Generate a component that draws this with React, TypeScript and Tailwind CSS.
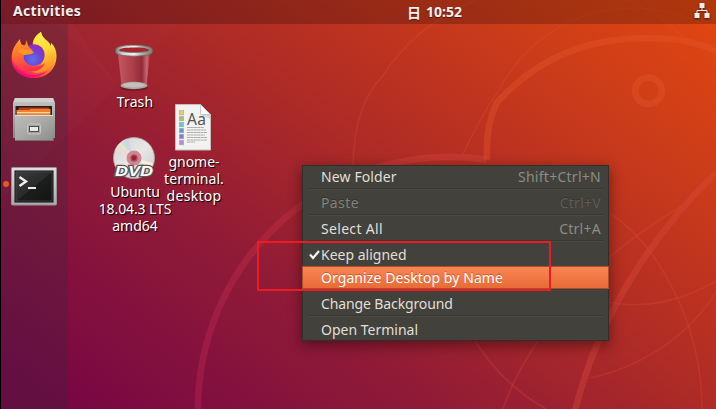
import type { ReactNode } from "react";

function Wallpaper() {
  return (
    <svg className="absolute inset-0" width="716" height="409" viewBox="0 0 716 409">
      <defs>
        <linearGradient id="sky" gradientUnits="userSpaceOnUse" x1="70" y1="409" x2="490" y2="-151">
          <stop offset="0" stopColor="#780743" />
          <stop offset="0.32" stopColor="#901b37" />
          <stop offset="0.43" stopColor="#9e222f" />
          <stop offset="0.55" stopColor="#ad2b27" />
          <stop offset="0.64" stopColor="#b83022" />
          <stop offset="0.81" stopColor="#cb3c1a" />
          <stop offset="1" stopColor="#e04611" />
        </linearGradient>
        <linearGradient id="ring" gradientUnits="userSpaceOnUse" x1="200" y1="409" x2="430" y2="155">
          <stop offset="0" stopColor="#b31f52" stopOpacity="0.5" />
          <stop offset="0.6" stopColor="#c03040" stopOpacity="0.45" />
          <stop offset="1" stopColor="#cc3d38" stopOpacity="0.6" />
        </linearGradient>
      </defs>
      <rect width="716" height="409" fill="url(#sky)" />
      <path d="M55 24 L118 86 L177 24Z" fill="#fff" fillOpacity="0.01" />
      <path d="M0 0H55L118 86L0 200Z" fill="#fff" fillOpacity="0.015" />
      <g fill="none" stroke="#e8503c" strokeOpacity="0.25" strokeWidth="1.6">
        <path d="M353 165 C354 120 366 93 382 77 C404 42 437 16 478 -1" />
        <path d="M463 154 C477 125 486 108 497 93 C518 53 562 8 633 8 C665 8 692 17 716 31" />
        <path d="M622 -1 Q660 12 684 38" />
        <path d="M610 213 C659 246 702 325 702 409" />
        <path d="M610 257 Q637 233 682 206" />
        <path d="M608 302 C645 310 684 300 716 281" />
        <path d="M716 292 C687 338 640 367 590 378" />
        <path d="M475 341 Q503 385 546 409" />
        <path d="M538 341 Q514 376 503 409" />
      </g>
      <path d="M198 409 A252 252 0 0 1 487 159.500" fill="none" stroke="url(#ring)" strokeWidth="6.500" />
      <g fill="none" stroke="#e65a2c" strokeOpacity="0.36" strokeWidth="6.500">
        <path d="M487 160 C486 139 489 119 496.500 103 C541 54 592 38 648 38 C673 38 698 42 716 51" />
        <circle cx="648.500" cy="90.700" r="13.300" />
      </g>
      <path d="M716 173 C666 221 602 302 575 411" fill="none" stroke="#db493c" strokeOpacity="0.38" strokeWidth="6.500" />
    </svg>
  );
}

function FirefoxIcon() {
  return (
    <svg width="46" height="48" viewBox="0 0 46 48">
      <defs>
        <linearGradient id="fxBody" x1="0.8" y1="0.05" x2="0.25" y2="1">
          <stop offset="0" stopColor="#fff44f" />
          <stop offset="0.35" stopColor="#ffb62b" />
          <stop offset="0.65" stopColor="#ff6a35" />
          <stop offset="0.85" stopColor="#ff3156" />
          <stop offset="1" stopColor="#e6007e" />
        </linearGradient>
        <linearGradient id="fxTail" x1="0.3" y1="0" x2="0.6" y2="1">
          <stop offset="0" stopColor="#fff44f" />
          <stop offset="0.5" stopColor="#ffd936" />
          <stop offset="1" stopColor="#ff8a25" />
        </linearGradient>
        <linearGradient id="fxFox" x1="0" y1="0" x2="0.2" y2="1">
          <stop offset="0" stopColor="#ffa41f" />
          <stop offset="0.5" stopColor="#ff7131" />
          <stop offset="1" stopColor="#ff334f" />
        </linearGradient>
        <radialGradient id="fxGlobe" cx="0.45" cy="0.7" r="0.65">
          <stop offset="0" stopColor="#5b71e8" />
          <stop offset="0.6" stopColor="#6e43d4" />
          <stop offset="1" stopColor="#9229c8" />
        </radialGradient>
      </defs>
      <path d="M30 1 C23 5 21 11 22 15 L10 15 L9 10 L6 15 C2 18 .5 23 .5 27 C.5 39 10 47 23 47 C36 47 45.500 38 45.500 25 C45.500 19 43 14 40 12 L40 15 C38 9 31 8 30 1Z" fill="url(#fxBody)" />
      <path d="M30 1 C24 5 22 10 22.500 15 C30 17 34 23 32 30 C30 38 20 41 13 37 C24 46 43 42 44 24 C44 19 42 15 40 12 L40 16 C37 10 31 8 30 1Z" fill="url(#fxTail)" />
      <circle cx="22.800" cy="24" r="10.800" fill="url(#fxGlobe)" />
      <path d="M1 25 C1 17 5 13 9 8 C9 12 11 15 14 14 L16 9 C16 14 18 17 22 19 C20 21 17 22 14 23 C12 25 12 29 15 32 C20 37 28 36 34 32 C31 40 21 43 13 39 C7 38 2 32 1 25Z" fill="url(#fxFox)" />
      <path d="M7 20 C12 17 18 19 23 21 C21 24 17 23 14 24 C11 23 8 22 7 20Z" fill="#ff9a1e" />
      <path d="M1 30 C5 44 22 48 36 40 C25 52 4 47 1 30Z" fill="#ec0a78" fillOpacity="0.75" />
    </svg>
  );
}

function FilesIcon() {
  return (
    <svg width="44" height="45" viewBox="0 0 44 45">
      <defs>
        <linearGradient id="cab" x1="0" y1="0" x2="0" y2="1">
          <stop offset="0" stopColor="#c6c6c4" />
          <stop offset="1" stopColor="#878787" />
        </linearGradient>
        <linearGradient id="drawer" x1="0" y1="0" x2="1" y2="1">
          <stop offset="0" stopColor="#bdbdbb" />
          <stop offset="0.4" stopColor="#acacaa" />
          <stop offset="1" stopColor="#8d8d8c" />
        </linearGradient>
      </defs>
      <path d="M3 1 H41 L43 6 V41 H1 V6Z" fill="url(#cab)" />
      <path d="M3 1H41L42.500 5H1.500Z" fill="#d0d0cf" />
      <path d="M3.500 9H40V20H3.500Z" fill="#241d1b" />
      <path d="M7 10.500H37L38 17H5Z" fill="#b93e12" />
      <path d="M4.500 13H17L19 12H38.500V18H4.500Z" fill="#ee8030" />
      <path d="M5 15H38V16.200H5Z" fill="#ffd8a0" />
      <path d="M3 18H41.500V44H3Z" fill="url(#drawer)" />
      <path d="M3 18.500H41" stroke="#dededc" />
      <path d="M3 43.500H41" stroke="#737373" />
      <rect x="15.500" y="27" width="13" height="10" rx="1.500" fill="#a4a4a4" stroke="#c9c9c9" />
      <rect x="17.500" y="29.500" width="9" height="5" fill="#e8e8e8" stroke="#4e4e4e" />
    </svg>
  );
}

function TerminalIcon() {
  return (
    <svg width="46" height="39" viewBox="0 0 46 39">
      <defs>
        <linearGradient id="screen" x1="0" y1="0" x2="1" y2="1">
          <stop offset="0" stopColor="#3c3d3c" />
          <stop offset="0.5" stopColor="#292b2a" />
          <stop offset="0.51" stopColor="#1c1e1d" />
          <stop offset="1" stopColor="#121414" />
        </linearGradient>
        <linearGradient id="bezel" x1="0" y1="0" x2="0" y2="1">
          <stop offset="0" stopColor="#dededd" />
          <stop offset="1" stopColor="#a9a8a8" />
        </linearGradient>
      </defs>
      <rect x="0.500" y="0.500" width="45" height="37.500" rx="1" fill="url(#bezel)" stroke="#969494" />
      <rect x="4" y="4" width="38" height="31" fill="url(#screen)" stroke="#0d0d0d" />
      <rect x="5" y="5" width="36" height="29" fill="none" stroke="#545554" strokeWidth="0.600" />
      <path d="M8.500 10L15 14.500L8.500 19" fill="none" stroke="#ededeb" strokeWidth="2.400" />
      <path d="M17 21H25" stroke="#ededeb" strokeWidth="2" />
    </svg>
  );
}

function TrashIcon() {
  return (
    <svg width="38" height="48" viewBox="0 0 38 48">
      <defs>
        <linearGradient id="glass" x1="0" y1="0" x2="1" y2="0">
          <stop offset="0" stopColor="#e08a92" stopOpacity="0.55" />
          <stop offset="0.3" stopColor="#c96772" stopOpacity="0.5" />
          <stop offset="0.75" stopColor="#8a2f3c" stopOpacity="0.65" />
          <stop offset="0.9" stopColor="#e2949a" stopOpacity="0.6" />
          <stop offset="1" stopColor="#b44d57" stopOpacity="0.5" />
        </linearGradient>
        <linearGradient id="rim" x1="0" y1="0" x2="1" y2="0">
          <stop offset="0" stopColor="#777a75" />
          <stop offset="0.2" stopColor="#d5d6d2" />
          <stop offset="0.5" stopColor="#f1f1ef" />
          <stop offset="0.75" stopColor="#a3a5a0" />
          <stop offset="1" stopColor="#777a75" />
        </linearGradient>
      </defs>
      <ellipse cx="19" cy="43.500" rx="14" ry="3.500" fill="#3a1014" fillOpacity="0.4" />
      <path d="M3 9L6.500 42Q19 48 31.500 42L35 9Z" fill="url(#glass)" />
      <ellipse cx="19" cy="41.500" rx="13.500" ry="3.700" fill="#a9a5a1" />
      <ellipse cx="19" cy="41" rx="11" ry="2.600" fill="#c3bfbb" />
      <path fillRule="evenodd" d="M.5 5.500C.5 -.5 37.500 -.5 37.500 5.500V8C37.500 13.500 .5 13.500 .5 8ZM4 6C4 9.300 34 9.300 34 6C34 2.700 4 2.700 4 6Z" fill="url(#rim)" />
      <path d="M1 6C1 -.2 37 -.2 37 6M4 6C4 9.300 34 9.300 34 6" fill="none" stroke="#6b6e69" strokeWidth="0.700" />
      <path d="M.8 8.500C1 13.300 37 13.300 37.200 8.500" fill="none" stroke="#686a66" strokeWidth="0.800" />
    </svg>
  );
}

function DiscIcon() {
  return (
    <svg width="44" height="43" viewBox="0 0 44 43">
      <defs>
        <linearGradient id="disc" x1="0" y1="0" x2="1" y2="1">
          <stop offset="0" stopColor="#d2d2d2" />
          <stop offset="0.5" stopColor="#e8e7e5" />
          <stop offset="1" stopColor="#c8c8c7" />
        </linearGradient>
      </defs>
      <circle cx="22" cy="21" r="20.500" fill="url(#disc)" stroke="#aaa" strokeWidth="0.800" />
      <path d="M22 21L3 13L6 8Z" fill="#f0d9d6" />
      <path d="M22 21L6 8L9 5Z" fill="#e3e8cb" />
      <path d="M22 21L9 5L12 3Z" fill="#c6e2dc" />
      <path d="M22 21L12 3L16 2Z" fill="#d8d0e6" />
      <path d="M22 21L41 26L39 32Z" fill="#f3f0e0" />
      <circle cx="22" cy="21" r="5.500" fill="#ab3048" stroke="#cf8592" strokeWidth="4" />
      <circle cx="22" cy="21" r="2.900" fill="#a11f35" stroke="#a05a66" strokeWidth="0.900" />
      <text x="22" y="39" textAnchor="middle" textLength="38" lengthAdjust="spacingAndGlyphs" fontFamily="Liberation Sans, sans-serif" fontSize="14.500" fontWeight="700" fontStyle="italic" fill="#fff" stroke="#555" strokeWidth="2.400" paintOrder="stroke">DVD</text>
    </svg>
  );
}

const swatches = ["#e5ce62", "#a5bd80", "#6bc3dc", "#6798dd", "#8379d5", "#b989cf"];

function DocumentIcon() {
  return (
    <svg width="36" height="47" viewBox="0 0 36 47">
      <path d="M.5 .5H25.500L35.500 10.500V46H.5Z" fill="#f2f2f1" stroke="#c4bdbc" />
      <path d="M25.500 .5V10.500H35.500Z" fill="#fff" stroke="#c9c9c9" />
      <path d="M26 11H35V15Z" fill="#bbb" fillOpacity="0.5" />
      {swatches.map((color, i) => (
        <rect key={color} x="4.500" y={6.500 + i * 6} width="4" height="4.200" fill={color} stroke="#8d8d70" strokeOpacity="0.45" />
      ))}
      <text x="12" y="21" textLength="19" fontFamily="Noto Sans, sans-serif" fontSize="15.500" fill="#555">Aa</text>
      <path d="M12 23.500H29M12 26H31M12 28.500H32M12 31H30M12 33.500H32M12 36H32M12 38H20" stroke="#a3a3a3" strokeWidth="0.900" strokeDasharray="3 .4" />
    </svg>
  );
}

function NetworkIcon() {
  return (
    <svg width="16" height="16" viewBox="0 0 16 16" className="drop-shadow-[0_1px_1px_rgba(0,0,0,0.6)]">
      <path d="M8 5V8M3 11V7.500H13V11" fill="none" stroke="#f0eeec" strokeWidth="1" />
      <path d="M5.500 0H10.500V5H5.500ZM0.500 10H5.500V15H0.500ZM10.500 10H15.500V15H10.500Z" fill="#f0eeec" />
    </svg>
  );
}

function Label({ lines, className }: { lines: [string, string][]; className: string }) {
  return (
    <div className={`absolute flex flex-col items-center whitespace-nowrap text-[14px] leading-[17px] text-white [text-shadow:1px_1px_1px_#000] ${className}`}>
      {lines.map(([text, tracking]) => (
        <span key={text} className={tracking}>{text}</span>
      ))}
    </div>
  );
}

function Separator() {
  return (
    <div className="h-[3px] px-[5px]">
      <div className="h-px bg-[#393834]" />
      <div className="h-px bg-[#494843]" />
    </div>
  );
}

type ItemProps = { label: string; tracking: string; shortcut?: string; disabled?: boolean; checked?: boolean; active?: boolean };

function Item({ label, tracking, shortcut, disabled, checked, active }: ItemProps) {
  const tone = active
    ? "bg-linear-to-b from-[#fb8655] to-[#e66a35] text-white shadow-[inset_0_0_0_1px_#a9502b] [text-shadow:0_-1px_0_rgba(150,60,20,0.5)]"
    : disabled
      ? "text-[#83827c] [text-shadow:0_-1px_0_#33322e]"
      : "text-[#e0dfd8]";
  return (
    <div className={`flex h-[23px] items-center pr-[8px] text-[14px] leading-none ${tone}`}>
      <span className="flex w-[18px] justify-end">
        {checked && (
          <svg width="11" height="10" viewBox="0 0 11 10">
            <path d="M1 4.500L4 8L10 1" fill="none" stroke="#f4f3ef" strokeWidth="2.200" />
          </svg>
        )}
      </span>
      <span className={`ml-px whitespace-nowrap ${tracking}`}>{label}</span>
      {shortcut && (
        <span className={`ml-auto tracking-[0.27px] ${disabled ? "text-[#5f5e59]" : "text-[#8d8c85]"}`}>{shortcut}</span>
      )}
    </div>
  );
}

function Menu({ children }: { children: ReactNode }) {
  return (
    <div className="absolute left-[302px] top-[165px] w-[307px] bg-[#42413b] shadow-[0_4px_12px_1px_rgba(30,0,0,0.45)]">
      {children}
      <div className="pointer-events-none absolute inset-x-0 top-0 h-[101px] border-x border-t border-[#302f2b]" />
      <div className="pointer-events-none absolute inset-x-0 bottom-0 h-[52px] border-x border-b border-[#302f2b]" />
    </div>
  );
}

export default function App() {
  return (
    <div className="relative flex h-[409px] w-[716px] flex-col overflow-hidden font-['Noto_Sans','Noto_Sans_CJK_SC',sans-serif]">
      <Wallpaper />
      <header className="relative flex h-6 shrink-0 items-center bg-black/22 pl-[13px] pr-[6px] text-[14px] font-bold leading-none text-[#f1efed] [text-shadow:0_1px_1px_rgba(0,0,0,0.5)]">
        <span className="w-[394px] pb-[2px] tracking-[0.32px]">Activities</span>
        <span className="flex items-center gap-[5px]">
          <span className="pb-px font-['Noto_Sans_CJK_SC',sans-serif]">日</span>
          <span>10:52</span>
        </span>
        <span className="ml-auto pb-[3px]"><NetworkIcon /></span>
      </header>
      <div className="relative flex flex-1">
        <nav className="flex w-[68px] flex-col items-center bg-[rgba(30,45,65,0.22)]">
          <div className="mt-[7px] h-[48px]"><FirefoxIcon /></div>
          <div className="mt-[18px] h-[45px]"><FilesIcon /></div>
          <div className="relative mt-[25px] h-[39px]">
            <TerminalIcon />
            <span className="absolute -left-[8px] top-[14px] size-[6px] rounded-full bg-[#e95420]" />
          </div>
        </nav>
      </div>
      <div className="absolute inset-y-0 left-0 w-px bg-black" />

      <div className="absolute left-[115px] top-[44px]"><TrashIcon /></div>
      <Label className="left-[95px] top-[93px] w-20" lines={[["Trash", "tracking-[0.1px]"]]} />
      <div className="absolute left-[112px] top-[137px]"><DiscIcon /></div>
      <Label
        className="left-[95px] top-[183px] w-20"
        lines={[["Ubuntu", "tracking-[-0.05px]"], ["18.04.3 LTS", "tracking-[-0.1px]"], ["amd64", "tracking-normal"]]}
      />
      <div className="absolute left-[175px] top-[104px]"><DocumentIcon /></div>
      <Label
        className="left-[154px] top-[153px] w-20"
        lines={[["gnome-", "tracking-normal"], ["terminal.", "tracking-[0.05px]"], ["desktop", "tracking-[0.3px]"]]}
      />

      <Menu>
        <Item label="New Folder" tracking="tracking-[0.12px]" shortcut="Shift+Ctrl+N" />
        <Separator />
        <Item label="Paste" tracking="tracking-[0.4px]" shortcut="Ctrl+V" disabled />
        <Separator />
        <Item label="Select All" tracking="tracking-[0.32px]" shortcut="Ctrl+A" />
        <Separator />
        <Item label="Keep aligned" tracking="tracking-normal" checked />
        <Item label="Organize Desktop by Name" tracking="tracking-[0.08px]" active />
        <Separator />
        <Item label="Change Background" tracking="tracking-[-0.12px]" />
        <Separator />
        <Item label="Open Terminal" tracking="tracking-normal" />
      </Menu>
      <div className="absolute left-[257px] top-[241px] h-[50px] w-[294px] border-2 border-[#ed1c24]" />
    </div>
  );
}
